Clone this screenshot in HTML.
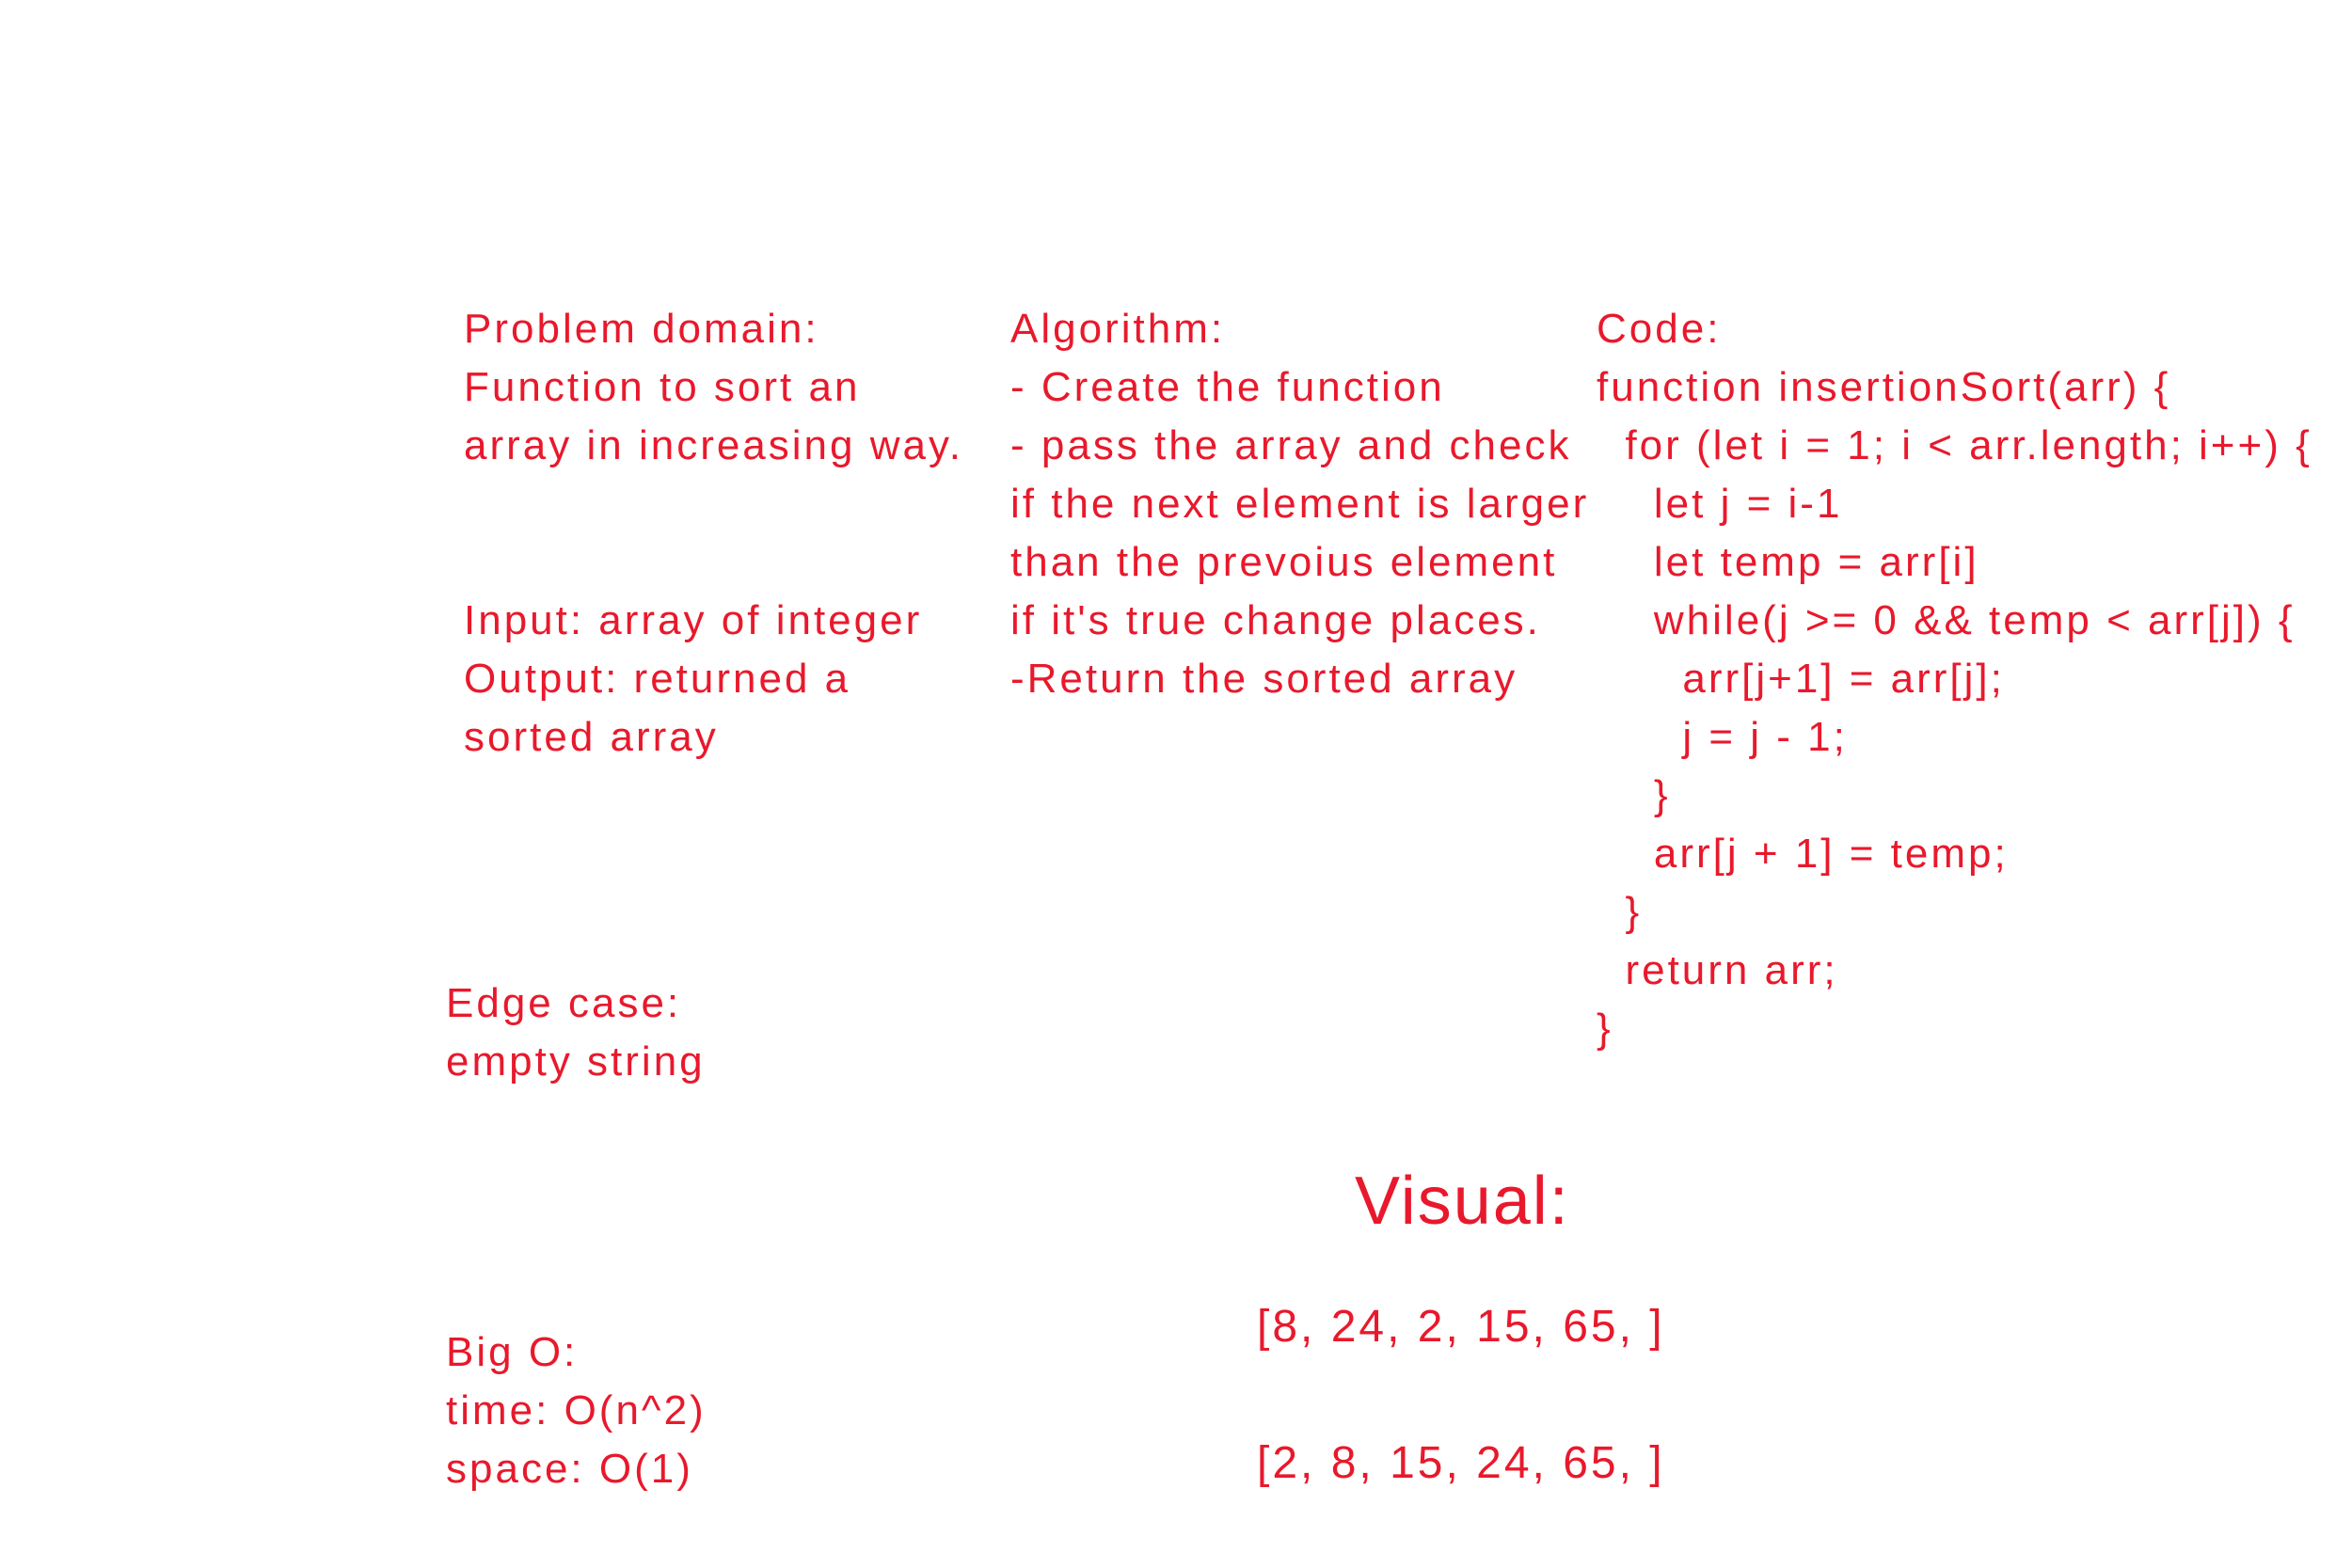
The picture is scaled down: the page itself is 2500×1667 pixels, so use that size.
<!DOCTYPE html>
<html><head><meta charset="utf-8"><style>
html,body{margin:0;padding:0;background:#fff;}
body{width:2500px;height:1667px;position:relative;overflow:hidden;font-family:"Liberation Sans",sans-serif;color:#e8192c;font-size:44px;letter-spacing:3px;}
.t{position:absolute;white-space:pre;line-height:62px;}
</style></head><body>
<div class="t" style="left:493px;top:319px">Problem domain:
Function to sort an
array in increasing way.


Input: array of integer
Output: returned a
sorted array</div>
<div class="t" style="left:1074px;top:319px">Algorithm:
- Create the function
- pass the array and check
if the next element is larger
than the prevoius element
if it's true change places.
-Return the sorted array</div>
<div class="t" style="left:1697px;top:319px">Code:
function insertionSort(arr) {
  for (let i = 1; i &lt; arr.length; i++) {
    let j = i-1
    let temp = arr[i]
    while(j &gt;= 0 &amp;&amp; temp &lt; arr[j]) {
      arr[j+1] = arr[j];
      j = j - 1;
    }
    arr[j + 1] = temp;
  }
  return arr;
}</div>
<div class="t" style="left:474px;top:1036px">Edge case:
empty string</div>
<div class="t" style="left:474px;top:1407px">Big O:
time: O(n^2)
space: O(1)</div>
<div class="t" style="left:1440px;top:1232px;font-size:72px;line-height:90px;letter-spacing:2px">Visual:</div>
<div class="t" style="left:1336px;top:1380px;font-size:48px;letter-spacing:3px">[8, 24, 2, 15, 65, ]</div>
<div class="t" style="left:1336px;top:1525px;font-size:48px;letter-spacing:3px">[2, 8, 15, 24, 65, ]</div>
</body></html>
